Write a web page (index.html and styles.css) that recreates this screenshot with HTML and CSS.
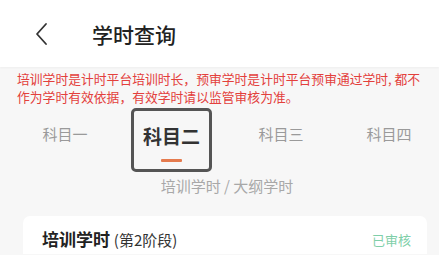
FILE: index.html
```html
<!DOCTYPE html>
<html lang="zh-CN">
<head>
<meta charset="utf-8">
<title>学时查询</title>
<link rel="stylesheet" href="styles.css">
</head>
<body>
<header class="header">
  <svg class="back" width="14" height="24" viewBox="0 0 14 24" aria-hidden="true">
    <path d="M11 2 L2 12 L11 22" fill="none" stroke="#333" stroke-width="1.8" stroke-linecap="round" stroke-linejoin="round"/>
  </svg>
  <h1 class="title">学时查询</h1>
</header>
<p class="notice">培训学时是计时平台培训时长，预审学时是计时平台预审通过学时, 都不作为学时有效依据，有效学时请以监管审核为准。</p>
<nav class="tabs">
  <div class="tab"><span class="tab-label">科目一</span></div>
  <div class="tab active">
    <div class="tab-box">
      <span class="tab-label">科目二</span>
      <span class="tab-line"></span>
    </div>
  </div>
  <div class="tab"><span class="tab-label">科目三</span></div>
  <div class="tab"><span class="tab-label">科目四</span></div>
</nav>
<p class="subtitle">培训学时 / 大纲学时</p>
<section class="card">
  <div class="card-head">
    <h2 class="card-title">培训学时 <span class="card-stage">(第2阶段)</span></h2>
    <span class="status">已审核</span>
  </div>
</section>
</body>
</html>
```

FILE: styles.css
```css
* { box-sizing: border-box; }
html, body {
  margin: 0;
  padding: 0;
}
body {
  width: 439px;
  height: 255px;
  overflow: hidden;
  background: #f7f7f7;
  font-family: "Noto Sans CJK SC", "Noto Sans", "Liberation Sans", sans-serif;
  color: #222;
}
.header {
  height: 67px;
  background: #fff;
  display: flex;
  align-items: center;
  padding-left: 35px;
  box-shadow: 0 1px 2px rgba(0,0,0,0.04);
}
.back {
  display: block;
}
.title {
  margin: 0 0 0 43px;
  font-size: 21px;
  font-weight: 500;
  line-height: 28px;
  color: #222;
}
.notice {
  margin: 3px 0 0;
  padding: 0 14px 0 17px;
  font-size: 12.8px;
  line-height: 17.5px;
  color: #e3403c;
}
.tabs {
  display: grid;
  grid-template-columns: repeat(4, 108px);
  padding-left: 11px;
  margin-top: 3px;
  height: 64px;
}
.tab {
  display: flex;
  flex-direction: column;
  align-items: center;
}
.tab-label {
  margin-top: 16px;
  font-size: 15px;
  line-height: 20px;
  color: #9a9a9a;
}
.tab-box {
  width: 81px;
  height: 64px;
  border: 3px solid #555;
  border-radius: 5px;
  display: flex;
  flex-direction: column;
  align-items: center;
  padding-top: 13px;
  margin-left: -3px;
}
.active .tab-label {
  margin-top: 0;
  font-size: 19px;
  line-height: 24px;
  font-weight: 700;
  color: #333;
}
.tab-line {
  margin-top: 11px;
  width: 21px;
  height: 2.5px;
  border-radius: 1px;
  background: #e57b4e;
}
.subtitle {
  margin: 4px 0 0;
  padding-left: 15px;
  text-align: center;
  font-size: 15px;
  line-height: 20px;
  color: #a8a8a8;
}
.card {
  margin: 20px 12px 0 23px;
  background: #fff;
  border-radius: 7px 7px 0 0;
  padding: 11px 16px 0 19px;
  height: 38px;
}
.card-head {
  display: flex;
  justify-content: space-between;
  align-items: center;
}
.card-title {
  margin: 0;
  font-size: 17px;
  line-height: 24px;
  font-weight: 700;
  color: #222;
}
.card-stage {
  font-size: 15px;
  font-weight: 400;
  color: #333;
}
.status {
  font-size: 13px;
  line-height: 20px;
  color: #7fcfa9;
}
```
